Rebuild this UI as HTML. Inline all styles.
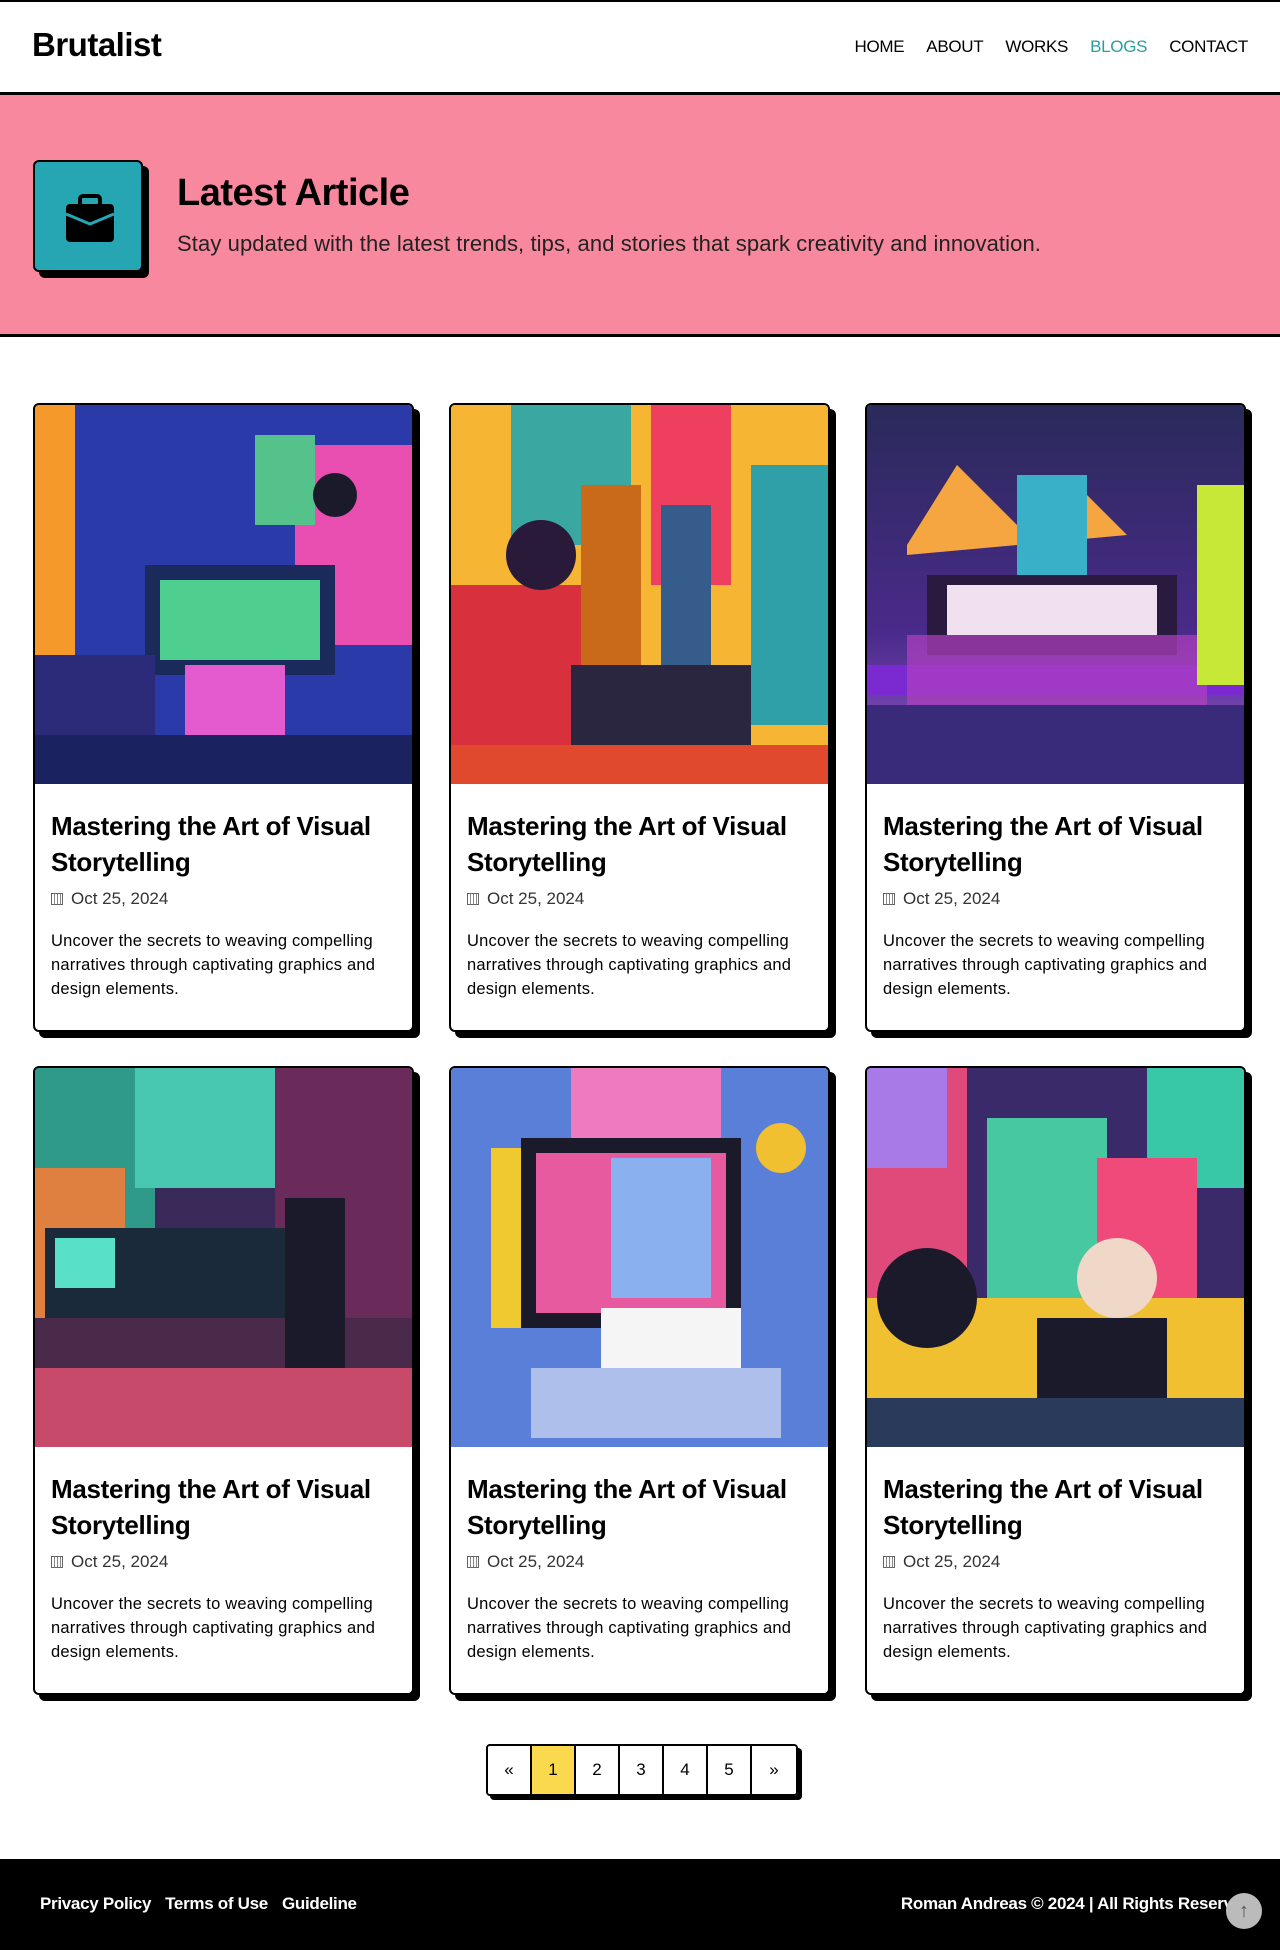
<!DOCTYPE html>
<html><head><meta charset="utf-8"><style>
*{box-sizing:border-box;margin:0;padding:0}
body{width:1280px;height:1950px;font-family:"Liberation Sans",sans-serif;background:#fff;color:#000;position:relative;overflow:hidden}
header{height:95px;border-top:2px solid #000;border-bottom:3px solid #000;display:flex;align-items:center;justify-content:space-between;padding:0 32px}
.logo{font-size:33px;font-weight:bold;letter-spacing:-0.5px;margin-top:-4px}
nav a{font-size:17px;margin-left:22px;color:#000;text-decoration:none;letter-spacing:-0.3px}
nav a.act{color:#2a9d9a}
.hero{height:242px;background:#f7889d;border-bottom:3px solid #000;position:relative}
.ibox{position:absolute;left:33px;top:65px;width:110px;height:112px;background:#26a6b3;border:2px solid #000;border-radius:6px;box-shadow:6px 6px 0 #000}
.hero h1{position:absolute;left:177px;top:77px;font-size:38px;font-weight:bold;letter-spacing:-0.5px}
.hero p{position:absolute;left:177px;top:136px;font-size:22px;color:#222;letter-spacing:0.1px}
.grid{position:absolute;left:33px;top:403px;width:1213px;display:grid;grid-template-columns:381px 381px 381px;column-gap:35px;row-gap:34px}
.card{height:629px;border:2px solid #000;border-radius:6px;box-shadow:6px 6px 0 #000;overflow:hidden;background:#fff}
.card svg{display:block;width:377px;height:379px}
.cb{padding:24px 16px 0 16px}
.cb h3{font-size:26px;line-height:36px;font-weight:bold;letter-spacing:-0.3px}
.dt{font-size:17px;color:#333;margin-top:9px;display:flex;align-items:center}
.dt i{display:inline-block;width:12px;height:12px;border:1.5px solid #666;margin-right:8px;background:repeating-linear-gradient(90deg,#fff 0 2px,#888 2px 3px)}
.cb p{font-size:16.5px;line-height:24px;margin-top:20px;letter-spacing:0.2px;padding-right:4px}
.pg{position:absolute;left:486px;top:1744px;display:flex;border:2px solid #000;border-radius:4px;box-shadow:4px 4px 0 #000;overflow:hidden}
.pg span{width:44px;height:48px;display:flex;align-items:center;justify-content:center;font-size:17px;border-right:2px solid #000;background:#fff}
.pg span:last-child{border-right:none}
.pg .on{background:#fbd94e}
footer{position:absolute;left:0;top:1859px;width:1280px;height:91px;background:#000;color:#fff;font-size:17px;font-weight:bold;letter-spacing:-0.3px}
.fl{position:absolute;left:40px;top:35px}
.fl span{margin-right:14px}
.fr{position:absolute;right:28px;top:35px}
.up{position:absolute;left:1226px;top:1893px;width:36px;height:36px;border-radius:50%;background:#bbb;color:#555;text-align:center;line-height:36px;font-size:20px}
</style></head><body>
<header><div class="logo">Brutalist</div><nav><a>HOME</a><a>ABOUT</a><a>WORKS</a><a class="act">BLOGS</a><a>CONTACT</a></nav></header>
<div class="hero"><div class="ibox"><svg width="110" height="110" viewBox="0 0 110 110"><rect x="31" y="42" width="48" height="38" rx="4" fill="#000"/><rect x="45" y="34" width="20" height="10" rx="3" fill="none" stroke="#000" stroke-width="4"/><path d="M31 52 L55 62 L79 52" stroke="#26a6b3" stroke-width="3" fill="none"/></svg></div>
<h1>Latest Article</h1><p>Stay updated with the latest trends, tips, and stories that spark creativity and innovation.</p></div>
<div class="grid">
<div class="card"><svg viewBox="0 0 377 379"><rect width="377" height="379" fill="#2a3aa8"/><rect x="0" y="0" width="40" height="379" fill="#f59a2a"/><rect x="260" y="40" width="117" height="200" fill="#e84fb0"/><rect x="110" y="160" width="190" height="110" fill="#1a2a5a"/><rect x="125" y="175" width="160" height="80" fill="#4fcf8f"/><rect x="220" y="30" width="60" height="90" fill="#55c28c"/><rect x="150" y="260" width="100" height="119" fill="#e45bd0"/><rect x="0" y="250" width="120" height="129" fill="#2b2b7a"/><circle cx="300" cy="90" r="22" fill="#1a1a2a"/><rect x="0" y="330" width="377" height="49" fill="#1b2260"/></svg><div class="cb"><h3>Mastering the Art of Visual Storytelling</h3><div class="dt"><i></i>Oct 25, 2024</div><p>Uncover the secrets to weaving compelling narratives through captivating graphics and design elements.</p></div></div>
<div class="card"><svg viewBox="0 0 377 379"><rect width="377" height="379" fill="#f6b532"/><rect x="60" y="0" width="120" height="140" fill="#3aa8a0"/><rect x="200" y="0" width="80" height="180" fill="#ee3f5e"/><rect x="300" y="60" width="77" height="260" fill="#2f9fa8"/><rect x="0" y="180" width="140" height="199" fill="#d9303e"/><circle cx="90" cy="150" r="35" fill="#2a1a3a"/><rect x="130" y="80" width="60" height="200" fill="#c96a1a"/><rect x="210" y="100" width="50" height="180" fill="#355c8a"/><rect x="120" y="260" width="180" height="90" fill="#2a2640"/><rect x="0" y="340" width="377" height="39" fill="#e0492e"/></svg><div class="cb"><h3>Mastering the Art of Visual Storytelling</h3><div class="dt"><i></i>Oct 25, 2024</div><p>Uncover the secrets to weaving compelling narratives through captivating graphics and design elements.</p></div></div>
<div class="card"><svg viewBox="0 0 377 379"><defs><linearGradient id="g3" x1="0" y1="0" x2="0" y2="1"><stop offset="0" stop-color="#2a2a5a"/><stop offset=".6" stop-color="#4a2a8a"/><stop offset="1" stop-color="#9a5ad0"/></linearGradient></defs><rect width="377" height="379" fill="url(#g3)"/><polygon points="40,140 90,60 150,120 200,70 260,130 40,150" fill="#f5a640"/><rect x="150" y="70" width="70" height="130" fill="#3ab0c8"/><rect x="60" y="170" width="250" height="80" fill="#2a1a40"/><rect x="80" y="180" width="210" height="50" fill="#f0e0f0"/><rect x="0" y="260" width="377" height="30" fill="#7a2ad0"/><rect x="40" y="230" width="300" height="100" fill="#b040c0" opacity=".7"/><rect x="330" y="80" width="47" height="200" fill="#c8e838"/><rect x="0" y="300" width="377" height="79" fill="#3a2a7a"/></svg><div class="cb"><h3>Mastering the Art of Visual Storytelling</h3><div class="dt"><i></i>Oct 25, 2024</div><p>Uncover the secrets to weaving compelling narratives through captivating graphics and design elements.</p></div></div>
<div class="card"><svg viewBox="0 0 377 379"><rect width="377" height="379" fill="#3a2a5a"/><rect x="0" y="0" width="120" height="160" fill="#2f9a8a"/><rect x="100" y="0" width="140" height="120" fill="#48c8b0"/><rect x="0" y="100" width="90" height="150" fill="#e08040"/><rect x="240" y="0" width="137" height="379" fill="#6a2a5a"/><rect x="10" y="160" width="240" height="100" fill="#1a2a3a"/><rect x="20" y="170" width="60" height="50" fill="#58e0c8"/><rect x="0" y="250" width="377" height="60" fill="#4a2a4a"/><rect x="0" y="300" width="377" height="79" fill="#c84a6a"/><rect x="250" y="130" width="60" height="170" fill="#1a1a2a"/></svg><div class="cb"><h3>Mastering the Art of Visual Storytelling</h3><div class="dt"><i></i>Oct 25, 2024</div><p>Uncover the secrets to weaving compelling narratives through captivating graphics and design elements.</p></div></div>
<div class="card"><svg viewBox="0 0 377 379"><rect width="377" height="379" fill="#5a7fd8"/><rect x="120" y="0" width="150" height="80" fill="#f07ac0"/><rect x="40" y="80" width="100" height="180" fill="#f0c830"/><rect x="70" y="70" width="220" height="190" fill="#1a1a2a"/><rect x="85" y="85" width="190" height="160" fill="#e85aa0"/><rect x="160" y="90" width="100" height="140" fill="#8ab0f0"/><rect x="150" y="240" width="140" height="60" fill="#f5f5f5"/><rect x="80" y="300" width="250" height="70" fill="#e8eaf8" opacity=".6"/><circle cx="330" cy="80" r="25" fill="#f0c030"/></svg><div class="cb"><h3>Mastering the Art of Visual Storytelling</h3><div class="dt"><i></i>Oct 25, 2024</div><p>Uncover the secrets to weaving compelling narratives through captivating graphics and design elements.</p></div></div>
<div class="card"><svg viewBox="0 0 377 379"><rect width="377" height="379" fill="#3a2a6a"/><rect x="0" y="0" width="100" height="379" fill="#e04a7a"/><rect x="0" y="0" width="80" height="100" fill="#a87ae8"/><rect x="280" y="0" width="97" height="120" fill="#38c8a8"/><rect x="120" y="50" width="120" height="200" fill="#48c8a0"/><rect x="230" y="90" width="100" height="150" fill="#f04a7a"/><rect x="0" y="230" width="377" height="100" fill="#f0c030"/><rect x="170" y="250" width="130" height="80" fill="#1a1a2a"/><circle cx="250" cy="210" r="40" fill="#f0d8c8"/><circle cx="60" cy="230" r="50" fill="#1a1a2a"/><rect x="0" y="330" width="377" height="49" fill="#2a3a5a"/></svg><div class="cb"><h3>Mastering the Art of Visual Storytelling</h3><div class="dt"><i></i>Oct 25, 2024</div><p>Uncover the secrets to weaving compelling narratives through captivating graphics and design elements.</p></div></div>
</div>
<div class="pg"><span>«</span><span class="on">1</span><span>2</span><span>3</span><span>4</span><span>5</span><span>»</span></div>
<footer><div class="fl"><span>Privacy Policy</span><span>Terms of Use</span><span>Guideline</span></div><div class="fr">Roman Andreas © 2024 | All Rights Reserved</div></footer>
<div class="up">↑</div>
</body></html>
